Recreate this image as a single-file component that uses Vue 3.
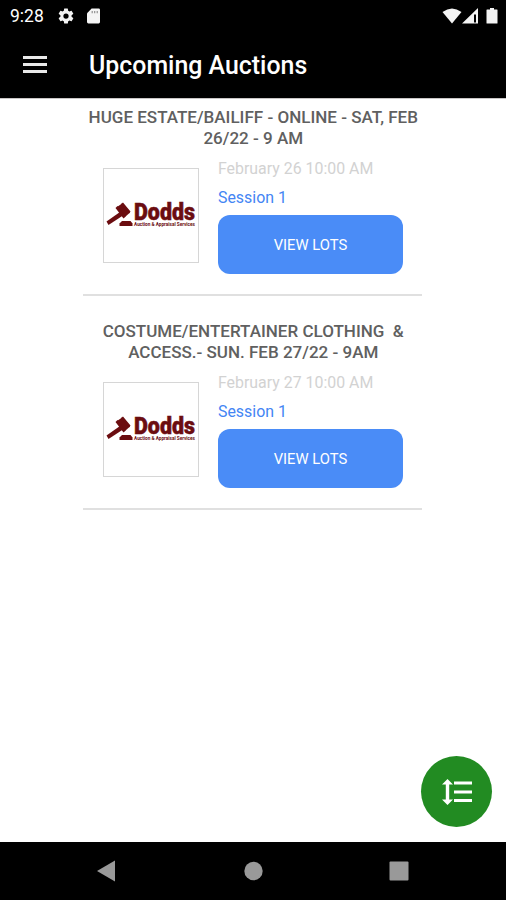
<template>
  <div class="screen">
    <header class="top">
      <div class="status-bar">
        <span class="clock">9:28</span>
        <svg class="gear" viewBox="0 0 24 24" aria-hidden="true">
          <path d="M19.4 13a7.500 7.500 0 0 0 0-2l2.100-1.650a.5.5 0 0 0 .12-.64l-2-3.460a.5.5 0 0 0-.61-.22l-2.490 1a7.300 7.300 0 0 0-1.690-.98l-.38-2.650A.49.49 0 0 0 14 2h-4a.49.49 0 0 0-.49.42l-.38 2.650c-.61.25-1.170.59-1.690.98l-2.490-1a.5.5 0 0 0-.61.22l-2 3.460a.5.5 0 0 0 .12.64L4.570 11a8 8 0 0 0 0 2l-2.110 1.650a.5.5 0 0 0-.12.64l2 3.460c.12.22.39.3.61.22l2.490-1c.52.4 1.080.73 1.690.98l.38 2.650c.03.24.24.4.49.4h4c.25 0 .46-.18.49-.42l.38-2.650c.61-.25 1.170-.59 1.690-.98l2.490 1c.23.09.49 0 .61-.22l2-3.460a.5.5 0 0 0-.12-.64L19.430 13zM12 15.500a3.500 3.500 0 1 1 0-7 3.500 3.500 0 0 1 0 7z" />
        </svg>
        <svg class="sd-card" viewBox="0 0 14 16" aria-hidden="true">
          <path d="M5 0h7.500Q14 0 14 1.500v13Q14 16 12.500 16h-11Q0 16 0 14.500V5z" />
          <path class="sd-pins" d="M5 2.500h1.200v2.500H5zM7.700 2.500h1.200v2.500H7.700zM10.400 2.500h1.200v2.500h-1.200z" />
        </svg>
        <svg class="signals" viewBox="0 0 56 18" aria-hidden="true">
          <path d="M.5 5Q10-2 19.500 5L10 16.500z" />
          <path fill-rule="evenodd" d="M20 16.500 36 1v15.500zM32 7.500v8h2v-8z" />
          <path d="M45 2.500H48V1h4v1.500h3q.5 0 .5.5v13q0 .5-.5.5H45q-.5 0-.5-.5V3q0-.5.5-.5z" />
        </svg>
      </div>
      <div class="toolbar">
        <button class="menu-button" aria-label="Menu">
          <span></span>
          <span></span>
          <span></span>
        </button>
        <h1 class="page-title">Upcoming Auctions</h1>
      </div>
    </header>

    <main class="content">
      <article v-for="auction in auctions" :key="auction.id" class="auction">
        <h2 class="auction-title">
          <span v-for="line in auction.title" :key="line" class="title-line">{{ line }}</span>
        </h2>
        <div class="auction-body">
          <div class="logo-box">
            <svg class="logo" viewBox="0 0 94 93" role="img" aria-label="Dodds">
              <path d="M13 38 18 34.500 26 43.500 20.500 48.500z" />
              <path d="M11.500 39 13.500 37 21.500 47.500 19.500 49.500zM17 35 19 33.500 26.500 42.500 25 44.500z" />
              <path d="M16 43 19 46.500 4.500 56 2.500 52.500z" />
              <path d="M18 52h8.500l2 2.500v2.500H15.500v-2.500z" />
              <text class="logo-name" x="30" y="50.800" textLength="61" lengthAdjust="spacingAndGlyphs">Dodds</text>
              <text class="logo-tagline" x="30" y="57" textLength="61" lengthAdjust="spacingAndGlyphs">Auction &amp; Appraisal Services</text>
            </svg>
          </div>
          <div class="details">
            <p class="date">{{ auction.date }}</p>
            <p class="session">Session 1</p>
            <button class="view-button">VIEW LOTS</button>
          </div>
        </div>
      </article>

      <button class="sort-button" aria-label="Sort">
        <svg viewBox="0 0 30 26" aria-hidden="true">
          <path d="M5.500 0 11 5.500H7.200v15H11L5.500 26 0 20.500h3.800v-15H0z" />
          <path d="M12 2.500h18v3H12zM12 11.500h18v3H12zM12 20h18v3H12z" />
        </svg>
      </button>
    </main>

    <nav class="nav-bar">
      <svg class="nav-icon" viewBox="0 0 20 22"><path d="M19 .5v21L1 11z" /></svg>
      <svg class="nav-icon" viewBox="0 0 20 22"><circle cx="10.500" cy="11" r="9.200" /></svg>
      <svg class="nav-icon" viewBox="0 0 20 22"><rect x=".5" y="1.500" width="19" height="19" rx="1" /></svg>
    </nav>
  </div>
</template>

<script setup>
const auctions = [
  {
    id: 1,
    title: ["HUGE ESTATE/BAILIFF - ONLINE - SAT, FEB", "26/22 - 9 AM"],
    date: "February 26 10:00 AM"
  },
  {
    id: 2,
    title: ["COSTUME/ENTERTAINER CLOTHING  &", "ACCESS.- SUN. FEB 27/22 - 9AM"],
    date: "February 27 10:00 AM"
  }
];
</script>

<style>
body {
  margin: 0;
}
</style>

<style scoped>
.screen {
  display: flex;
  flex-direction: column;
  width: 506px;
  height: 900px;
  overflow: hidden;
  background: #fff;
  font-family: Roboto, "Liberation Sans", sans-serif;
}

button {
  border: 0;
  padding: 0;
  font-family: inherit;
}

.top {
  height: 99px;
  background: #000;
  border-bottom: 1px solid #c9c6c6;
  box-sizing: border-box;
  color: #fff;
}

.status-bar {
  display: flex;
  align-items: center;
  height: 32px;
  padding: 0 8px 0 10px;
}

.status-bar svg {
  fill: #f4f4f4;
}

.clock {
  width: 47px;
  font-size: 17.500px;
}

.gear {
  width: 18px;
  height: 18px;
}

.sd-card {
  width: 13px;
  height: 16px;
  margin-left: 12px;
}

.status-bar .sd-pins {
  fill: #8a8a8a;
}

.signals {
  width: 56px;
  height: 18px;
  margin-left: auto;
}

.toolbar {
  display: flex;
  align-items: center;
  height: 66px;
  padding-left: 23px;
}

.menu-button {
  display: flex;
  flex-direction: column;
  gap: 4px;
  width: 24px;
  margin-top: -1px;
  margin-right: 42px;
  background: none;
}

.menu-button span {
  height: 3px;
  background: #e9e9e9;
}

.page-title {
  margin: 2px 0 0;
  font-size: 24.900px;
  font-weight: 500;
  line-height: 30px;
}

.content {
  position: relative;
  flex: 1;
  padding: 8px 84px 0 83px;
}

.auction {
  height: 187px;
  margin-bottom: 25px;
  border-bottom: 2px solid #e0e0e0;
}

.auction-title {
  margin: 0;
  color: #606060;
  font-size: 17.030px;
  font-weight: 500;
  line-height: 20.500px;
  text-align: center;
}

.title-line {
  display: block;
  margin: 0 -4px;
  padding-left: 1.500px;
  white-space: pre;
}

.auction-body {
  display: flex;
  gap: 19px;
  padding: 11px 0 0 20px;
}

.logo-box {
  width: 94px;
  height: 93px;
  margin-top: 9px;
  border: 1px solid #d6d6d6;
}

.logo {
  display: block;
  width: 94px;
  height: 93px;
  fill: #6b0d10;
}

.logo-name {
  font-size: 23px;
  font-weight: 900;
  stroke: #6b0d10;
  stroke-width: 0.5px;
}

.logo-tagline {
  font-size: 5.500px;
  font-weight: 700;
}

.details {
  width: 185px;
}

.date,
.session {
  margin: 0;
  font-size: 15.900px;
  line-height: 20px;
}

.date {
  color: #d2d2d2;
}

.session {
  margin-top: 9px;
  color: #4485f4;
}

.view-button {
  width: 185px;
  height: 59px;
  margin-top: 7px;
  border-radius: 12px;
  background: #4a8cf7;
  color: #fff;
  font-size: 14.800px;
}

.sort-button {
  position: absolute;
  right: 14px;
  bottom: 15px;
  display: flex;
  align-items: center;
  justify-content: center;
  width: 71px;
  height: 71px;
  border-radius: 50%;
  background: #228b22;
}

.sort-button svg {
  width: 30px;
  height: 26px;
  fill: #fff;
}

.nav-bar {
  display: flex;
  align-items: center;
  justify-content: space-between;
  height: 58px;
  padding: 0 97px 0 96px;
  box-sizing: border-box;
  background: #000;
}

.nav-icon {
  width: 20px;
  height: 22px;
  fill: #999;
}
</style>
